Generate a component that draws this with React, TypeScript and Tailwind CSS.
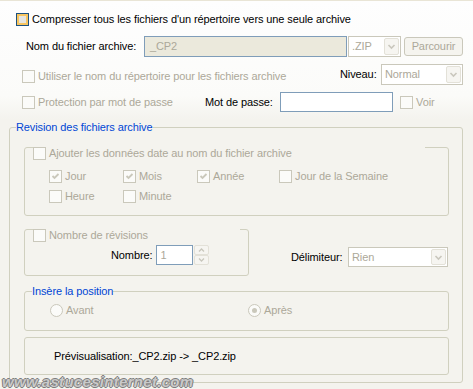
import React from 'react';

const GRAY = 'text-[#aca899]';

function CheckBox({ checked, disabled = true, hot }: { checked?: boolean; disabled?: boolean; hot?: boolean }) {
  if (hot) {
    return (
      <span className="inline-block h-[13px] w-[13px] shrink-0 border border-[#1c5180] bg-[#e6e5df] shadow-[inset_0_0_0_2px_#f8c55f]" />
    );
  }
  return (
    <span className="relative inline-flex h-[13px] w-[13px] shrink-0 items-center justify-center border border-[#cac8bb] bg-[#fbfbf9]">
      {checked && (
        <svg width="9" height="9" viewBox="0 0 9 9">
          <path d="M1.5 4 L3.5 6 L7.5 2" fill="none" stroke={disabled ? '#cac8bb' : '#21a121'} strokeWidth="1.8" />
        </svg>
      )}
    </span>
  );
}

function Radio({ checked }: { checked?: boolean }) {
  return (
    <span className="inline-flex h-[13px] w-[13px] shrink-0 items-center justify-center rounded-full border border-[#cac8bb] bg-[#fbfbf9]">
      {checked && <span className="h-[5px] w-[5px] rounded-full bg-[#cac8bb]" />}
    </span>
  );
}

function DropButton() {
  return (
    <span className="m-[1px] flex w-[15px] items-center justify-center rounded-[2px] border border-[#e3e1d8] bg-[#f6f5f1]">
      <svg width="9" height="7" viewBox="0 0 9 7">
        <path d="M1.5 2 L4.5 5 L7.5 2" fill="none" stroke="#c9c7bd" strokeWidth="1.6" />
      </svg>
    </span>
  );
}

function Combo({ value, className }: { value: string; className: string }) {
  return (
    <div className={`flex border border-[#cac8bb] bg-white ${className}`}>
      <span className={`flex flex-1 items-center pl-[3px] ${GRAY}`}>{value}</span>
      <DropButton />
    </div>
  );
}

function Spin() {
  return (
    <div className="ml-[1px] flex h-[20px] w-[15px] flex-col">
      {[0, 1].map((i) => (
        <span
          key={i}
          className="flex flex-1 items-center justify-center rounded-[2px] border border-[#e3e1d8] bg-[#f6f5f1]"
        >
          <svg width="7" height="4" viewBox="0 0 7 4">
            <path d={i === 0 ? 'M1 3.5 L3.5 1 L6 3.5' : 'M1 0.5 L3.5 3 L6 0.5'} fill="none" stroke="#c9c7bd" strokeWidth="1.3" />
          </svg>
        </span>
      ))}
    </div>
  );
}

export default function App() {
  return (
    <div className="relative h-[389px] w-[473px] overflow-hidden border-t border-[#e9e5d6] bg-[linear-gradient(to_bottom,#fefefe_0px,#fbfbf9_95px,#f4f3ee_118px,#f4f3ee_100%)] font-['Liberation_Sans',Arial,sans-serif] text-[11px] leading-[13px] tracking-[-0.1px] text-black">
      {/* Compress option */}
      <div className="ml-[16px] mt-[12px] flex h-[13px] items-center gap-[3px]">
        <CheckBox hot />
        <span>Compresser tous les fichiers d'un répertoire vers une seule archive</span>
      </div>

      {/* Archive name */}
      <div className="mt-[10px] flex h-[21px] items-center">
        <span className="ml-[26px] w-[118px]">Nom du fichier archive:</span>
        <div className={`flex h-[21px] w-[203px] items-center border border-[#7f9db9] bg-[#ebe9dc] pl-[5px] ${GRAY}`}>_CP2</div>
        <Combo value=".ZIP" className="ml-[1px] h-[21px] w-[53px]" />
        <div className={`ml-[3px] flex h-[19px] w-[59px] items-center justify-center rounded-[3px] border border-[#cac8bb] bg-[#f5f4ef] ${GRAY}`}>
          Parcourir
        </div>
      </div>

      {/* Directory name + level */}
      <div className="mt-[7px] flex h-[21px] items-center">
        <div className="ml-[22px] flex w-[318px] items-center gap-[3px] pt-[3px]">
          <CheckBox />
          <span className={GRAY}>Utiliser le nom du répertoire pour les fichiers archive</span>
        </div>
        <span className="w-[41px]">Niveau:</span>
        <Combo value="Normal" className="h-[21px] w-[82px]" />
      </div>

      {/* Password */}
      <div className="mt-[7px] flex h-[20px] items-center">
        <div className="ml-[22px] flex w-[183px] items-center gap-[3px]">
          <CheckBox />
          <span className={GRAY}>Protection par mot de passe</span>
        </div>
        <span className="w-[75px]">Mot de passe:</span>
        <div className="h-[20px] w-[113px] border border-[#7f9db9] bg-white" />
        <div className="ml-[7px] flex items-center gap-[3px]">
          <CheckBox />
          <span className={GRAY}>Voir</span>
        </div>
      </div>

      {/* Revision group */}
      <fieldset className="ml-[9px] mt-[9px] h-[262px] w-[454px] rounded-[3px] border border-[#d0d0bf]">
        <legend className="ml-[6px] h-[13px] px-0 text-[#0046d5]">Revision des fichiers archive</legend>

        <fieldset className="ml-[14px] mt-[1px] h-[81px] w-[425px] rounded-[3px] border border-[#d0d0bf]">
          <legend className="ml-[8px] flex h-[25px] w-[392px] items-end gap-[3px] px-0">
            <CheckBox />
            <span className={GRAY}>Ajouter les données date au nom du fichier archive</span>
          </legend>
          <div className="ml-[24px] mt-[10px] flex h-[13px] items-center">
            <label className="flex w-[74px] items-center gap-[3px]"><CheckBox checked /><span className={GRAY}>Jour</span></label>
            <label className="flex w-[74px] items-center gap-[3px]"><CheckBox checked /><span className={GRAY}>Mois</span></label>
            <label className="flex w-[82px] items-center gap-[3px]"><CheckBox checked /><span className={GRAY}>Année</span></label>
            <label className="flex items-center gap-[3px]"><CheckBox /><span className={GRAY}>Jour de la Semaine</span></label>
          </div>
          <div className="ml-[24px] mt-[7px] flex h-[13px] items-center">
            <label className="flex w-[74px] items-center gap-[3px]"><CheckBox /><span className={GRAY}>Heure</span></label>
            <label className="flex items-center gap-[3px]"><CheckBox /><span className={GRAY}>Minute</span></label>
          </div>
        </fieldset>

        <div className="mt-[1px] flex items-start">
          <fieldset className="ml-[14px] h-[59px] w-[225px] rounded-[3px] border border-[#d0d0bf]">
            <legend className="ml-[8px] flex h-[25px] w-[207px] items-end gap-[3px] px-0">
              <CheckBox />
              <span className={GRAY}>Nombre de révisions</span>
            </legend>
            <div className="ml-[86px] mt-[3px] flex h-[20px] items-center">
              <span>Nombre:</span>
              <div className={`ml-[4px] flex h-[20px] w-[37px] items-center border border-[#7f9db9] bg-white pl-[3px] ${GRAY}`}>1</div>
              <Spin />
            </div>
          </fieldset>
          <div className="ml-[42px] mt-[30px] flex h-[20px] items-center">
            <span className="w-[57px]">Délimiteur:</span>
            <Combo value="Rien" className="h-[20px] w-[100px]" />
          </div>
        </div>

        <fieldset className="ml-[14px] mt-[9px] h-[46px] w-[425px] rounded-[3px] border border-[#d0d0bf]">
          <legend className="ml-[7px] h-[13px] px-0 text-[#0046d5]">Insère la position</legend>
          <div className="ml-[25px] mt-[6px] flex h-[13px] items-center">
            <label className="flex w-[198px] items-center gap-[3px]"><Radio /><span className={GRAY}>Avant</span></label>
            <label className="flex items-center gap-[3px]"><Radio checked /><span className={GRAY}>Après</span></label>
          </div>
        </fieldset>

        <div className="ml-[14px] mt-[6px] h-[38px] w-[425px] rounded-[3px] border border-[#d0d0bf] pl-[29px] pt-[12px]">
          Prévisualisation:_CP2.zip -&gt; _CP2.zip
        </div>
      </fieldset>

      {/* site watermark */}
      <div className="absolute bottom-[-1px] left-[2px] text-[15px] font-bold italic leading-[17px] tracking-[0.3px] text-[#c9c9c9] [text-shadow:1px_0_0_#7d7d7d,-1px_0_0_#7d7d7d,0_1px_0_#7d7d7d,0_-1px_0_#7d7d7d]">
        www.astucesinternet.com
      </div>
    </div>
  );
}
